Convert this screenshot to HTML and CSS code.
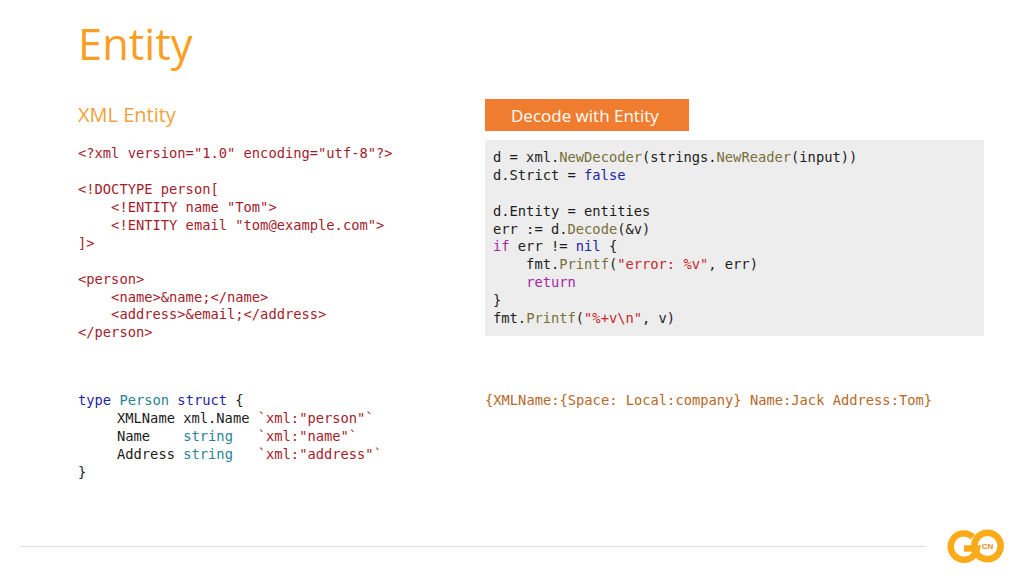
FILE: index.html
```html
<!DOCTYPE html>
<html lang="en">
<head>
<meta charset="utf-8">
<title>Entity</title>
<link rel="stylesheet" href="styles.css">
</head>
<body>
<main class="slide">
  <h1 class="title">Entity</h1>
  <div class="columns">
    <section class="col-left">
      <h2 class="subtitle">XML Entity</h2>
      <pre class="code xml">&lt;?xml version="1.0" encoding="utf-8"?&gt;

&lt;!DOCTYPE person[
    &lt;!ENTITY name "Tom"&gt;
    &lt;!ENTITY email "tom@example.com"&gt;
]&gt;

&lt;person&gt;
    &lt;name&gt;&amp;name;&lt;/name&gt;
    &lt;address&gt;&amp;email;&lt;/address&gt;
&lt;/person&gt;</pre>
      <pre class="code struct"><span class="kw">type</span> <span class="ty">Person</span> <span class="kw">struct</span> {
<span class="indent"></span>XMLName xml.Name <span class="tag">`xml:"person"`</span>
<span class="indent"></span>Name    <span class="ty">string</span>   <span class="tag">`xml:"name"`</span>
<span class="indent"></span>Address <span class="ty">string</span>   <span class="tag">`xml:"address"`</span>
}</pre>
    </section>
    <section class="col-right">
      <div class="badge">Decode with Entity</div>
      <pre class="code panel">d = xml.<span class="fn">NewDecoder</span>(strings.<span class="fn">NewReader</span>(input))
d.Strict = <span class="kw">false</span>

d.Entity = entities
err := d.<span class="fn">Decode</span>(&amp;v)
<span class="ctl">if</span> err != <span class="kw">nil</span> {
    fmt.<span class="fn">Printf</span>(<span class="str">"error: %v"</span>, err)
    <span class="ctl">return</span>
}
fmt.<span class="fn">Printf</span>(<span class="str">"%+v\n"</span>, v)</pre>
      <pre class="code output">{XMLName:{Space: Local:company} Name:Jack Address:Tom}</pre>
    </section>
  </div>
  <footer class="footer">
    <div class="rule"></div>
    <svg class="logo" width="58" height="34" viewBox="0 0 58 34" aria-label="GoCN">
      <path d="M26 8A13.200 13.200 0 1 0 30 19.500H17" fill="none" stroke="#fbab18" stroke-width="6.500"/>
      <circle cx="40.500" cy="17" r="13.200" fill="none" stroke="#fbab18" stroke-width="6.500"/>
      <text x="40.500" y="20" class="logo-text">CN</text>
    </svg>
  </footer>
</main>
</body>
</html>
```
FILE: styles.css
```css
* { box-sizing: border-box; }
html, body { margin: 0; padding: 0; background: #fff; }
.slide {
  width: 1024px;
  height: 576px;
  display: flex;
  flex-direction: column;
  overflow: hidden;
  font-family: "Open Sans", "Noto Sans", sans-serif;
}
.title {
  margin: 14px 0 0 78px;
  font-size: 43.5px;
  line-height: 60px;
  font-weight: 400;
  color: #f99f26;
}
.columns {
  display: grid;
  grid-template-columns: 407px 499px;
  margin: 25px 0 0 78px;
  height: 430px;
}
.subtitle {
  margin: 0;
  font-size: 20px;
  line-height: 32px;
  font-weight: 400;
  color: #f0a23c;
}
.code {
  margin: 0;
  font-family: "DejaVu Sans Mono", "Liberation Mono", monospace;
  font-size: 13.75px;
  line-height: 17.87px;
  color: #1c1c1c;
}
.xml { margin-top: 14px; line-height: 17.93px; color: #a31d2d; }
.struct { margin-top: 50px; line-height: 17.93px; }
.indent { display: inline-block; width: 39px; }
.kw { color: #1f1fa8; }
.ty { color: #2b8296; }
.tag { color: #a31d2d; }
.fn { color: #77703a; }
.ctl { color: #a81fa8; }
.str { color: #c8252c; }
.badge {
  width: 204px;
  height: 32px;
  padding-left: 26px;
  background: #f07d2f;
  color: #fff;
  font-size: 17px;
  line-height: 34px;
}
.panel {
  margin-top: 9px;
  padding: 9px 8px;
  height: 196px;
  background: #ededed;
}
.output { margin-top: 56px; color: #b8682a; }
.footer {
  display: flex;
  align-items: center;
  margin: 0 19px 0 20px;
  height: 34px;
}
.rule { width: 907px; height: 1px; background: #dedede; margin-right: 21px; }
.logo { flex: none; }
.logo-text {
  font-family: "Liberation Sans", sans-serif;
  font-size: 8px;
  font-weight: 700;
  fill: #e0921a;
  text-anchor: middle;
}
```
